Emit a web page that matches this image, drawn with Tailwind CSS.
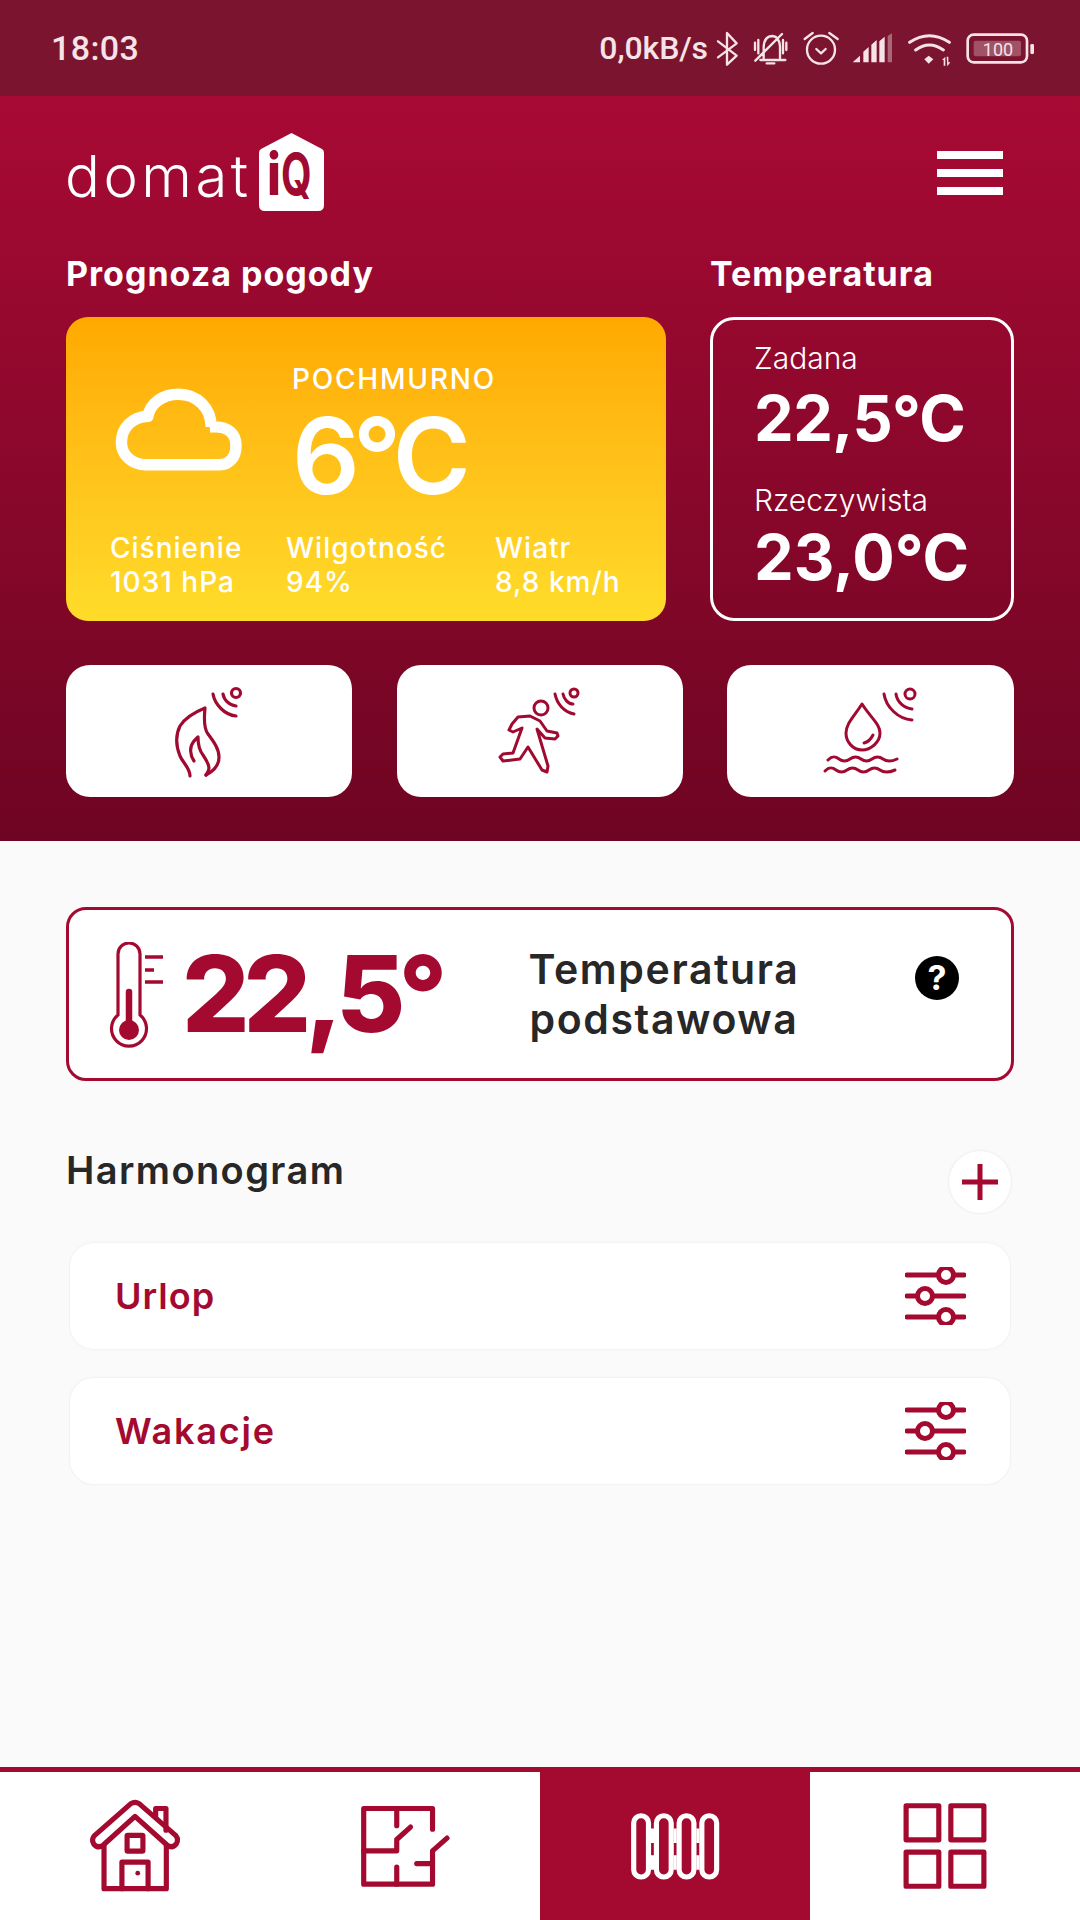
<!DOCTYPE html>
<html lang="pl"><head><meta charset="utf-8"><script src="https://cdn.jsdelivr.net/npm/@tailwindcss/browser@4"></script></head>
<body class="m-0">
<div class="w-[1080px] h-[1920px] flex flex-col bg-[#fafafa] overflow-hidden font-['Inter',sans-serif]">
  <!-- status bar -->
  <div class="h-[96px] shrink-0 bg-[#7b142e] flex items-center justify-between pl-[51px] pr-[44px] text-[#f6e3e8] font-['Roboto',sans-serif]">
    <span class="text-[34px] font-medium leading-none tracking-[0.4px]">18:03</span>
    <div class="flex items-center gap-[8px]">
      <span class="text-[32px] font-medium leading-none tracking-[-0.1px]">0,0kB/s</span>
      <svg class="w-[320px] h-[39px]" viewBox="470 85 960 117" fill="none" stroke="#f6e3e8" stroke-width="7" stroke-linecap="round" stroke-linejoin="round">
        <path d="M476 122 L532 165 L503 192 V97 L532 128 L476 170"/>
        <path d="M613 172 V138 Q615 106 640 106 Q660 108 662 138 V172 M603 178 H678 M622 188 H645 M587 126 V148 M597 118 V158 M671 118 V158 M681 126 V148 M588 180 L668 100"/>
        <circle cx="785" cy="147" r="42"/><path d="M736 115 L760 97 M810 97 L835 115 M771 145 L785 158 L799 145"/>
        <path stroke="none" fill="#f6e3e8" d="M880 185 L902 165 V185 Z M912 153 L928 139 V185 H912 Z M936 132 L952 118 V185 H936 Z M960 122 L976 108 V185 H960 Z"/>
        <path stroke="none" fill="#f6e3e8" fill-opacity=".4" d="M985 106 L998 98 V185 H985 Z"/>
        <path d="M1051 125 Q1110 85 1170 125 M1069 148 Q1110 118 1152 148" stroke-width="9"/>
        <path stroke="none" fill="#f6e3e8" d="M1095 176 L1108 165 L1122 176 L1108 189 Z M1148 178 L1158 168 V195 H1153 V178 Z M1162 168 H1167 V185 H1173 L1164 197 Z"/>
        <rect x="1225" y="102" width="178" height="83" rx="18" stroke-width="8"/>
        <rect x="1243" y="120" width="142" height="47" rx="6" fill="#f6e3e8" fill-opacity=".3" stroke="none"/>
        <text x="1316" y="166" text-anchor="middle" font-family="Roboto" font-size="54" font-weight="400" fill="#f6e3e8" stroke="none">100</text>
        <rect x="1413" y="130" width="11" height="30" rx="4" fill="#f6e3e8" stroke="none"/>
      </svg>
    </div>
  </div>
  <!-- header -->
  <div class="h-[745px] shrink-0 bg-gradient-to-b from-[#a80a34] to-[#6e0522] px-[66px] pt-[37px] text-white">
    <div class="flex items-start justify-between h-[78px]">
      <div class="flex items-end gap-[7px] -ml-[1px]">
        <span class="text-[58px] font-light leading-[58px] tracking-[3.5px] mb-[6px]">domat</span>
        <svg class="w-[65px] h-[78px]" viewBox="0 0 65 78">
          <path fill="#fff" d="M32.5 0 L63 16 Q65 17 65 20 V72 Q65 78 59 78 H6 Q0 78 0 72 V20 Q0 17 2 16 Z"/>
          <text transform="translate(8 62) scale(.85 1)" font-family="Inter" font-size="58" font-weight="800" fill="#a00a30">i</text>
          <text transform="translate(22 62) scale(.68 1)" font-family="Inter" font-size="58" font-weight="700" fill="#a00a30">Q</text>
        </svg>
      </div>
      <div class="flex flex-col gap-[10px] mt-[18px] mr-[11px]">
        <div class="w-[66px] h-[8px] bg-white"></div>
        <div class="w-[66px] h-[8px] bg-white"></div>
        <div class="w-[66px] h-[8px] bg-white"></div>
      </div>
    </div>
    <div class="flex justify-between mt-[43px] h-[40px] items-center text-[34px] font-bold leading-none">
      <span class="tracking-[1px]">Prognoza pogody</span>
      <span class="w-[304px] tracking-[1px]">Temperatura</span>
    </div>
    <div class="flex justify-between mt-[23px]">
      <div class="w-[600px] h-[304px] rounded-[22px] bg-gradient-to-b from-[#ffa900] to-[#ffdc2a] flex flex-col pl-[44px]">
        <div class="flex h-[190px]">
          <svg class="w-[143px] h-[106px] mt-[52px] -ml-[3px] shrink-0" viewBox="140 260 350 260" fill="none" stroke="#fff" stroke-width="28" stroke-linejoin="round"><path d="M392 402 H405 C435 402 456 418 456 448 C456 476 440 495 415 495 H235 C200 495 175 470 175 440 C175 405 200 378 240 376 C245 345 275 322 315 322 C360 322 395 355 395 402"/></svg>
          <div class="ml-[42px] pt-[42px]">
            <div class="text-[28px] font-medium leading-[40px] h-[47px] tracking-[1.8px]">POCHMURNO</div>
            <div class="text-[106px] font-semibold leading-[100px] tracking-[-7px]">6°C</div>
          </div>
        </div>
        <div class="flex text-[28px] font-medium leading-[34px] mt-[24px] tracking-[1px]">
          <div class="w-[176px]">Ciśnienie<br>1031 hPa</div>
          <div class="w-[209px]">Wilgotność<br>94%</div>
          <div>Wiatr<br>8,8 km/h</div>
        </div>
      </div>
      <div class="w-[304px] h-[304px] rounded-[24px] border-[3px] border-white pl-[41px] pt-[21px]">
        <div class="text-[30px] font-light leading-[34px]">Zadana</div>
        <div class="text-[63px] font-bold leading-[70px] tracking-[-0.5px] mt-[8px]">22,5°C</div>
        <div class="text-[30px] font-light leading-[34px] mt-[30px]">Rzeczywista</div>
        <div class="text-[63px] font-bold leading-[70px] tracking-[0px] mt-[5px]">23,0°C</div>
      </div>
    </div>
    <div class="flex justify-between mt-[44px]">
      <div class="w-[286px] h-[132px] rounded-[24px] bg-white flex items-center justify-center">
        <svg class="w-[120px] h-[120px]" viewBox="0 0 120 120" fill="none" stroke="#a00a30" stroke-width="3.2" stroke-linecap="round" stroke-linejoin="round">
          <path d="M41 105 C41 97 34 92 31 85 C27 75 26 65 31 55 C36 47 46 41 56 37 C55 47 55 58 59 63 C65 71 70 78 70 86 C70 94 65 100 57 104"/>
          <path d="M45 90 C41 84 40 76 45 70 L49 66 C49 74 50 79 54 84 C58 90 60 93 60 97 C60 100 58 102 57 104"/>
          <circle cx="87" cy="22" r="4.5"/><path d="M74 23 C75 29 80 34 87 35 M64 23 C66 34 76 44 87 45"/>
        </svg>
      </div>
      <div class="w-[286px] h-[132px] rounded-[24px] bg-white flex items-center justify-center">
        <svg class="w-[120px] h-[120px]" viewBox="0 0 120 120" fill="none" stroke="#a00a30" stroke-width="3" stroke-linecap="round" stroke-linejoin="round">
          <circle cx="61" cy="37" r="7"/>
          <path d="M38 46 L50 45 L60 50 L67 60 L77 62 L78 65 L75 68 L65 67 L57 58 L68 95 L67 101 L62 99 L48 76 L40 88 L23 90 L20 86 L23 83 L33 82 L42 57 L33 61 L29 59 L32 53 Z"/>
          <circle cx="94" cy="22" r="4"/><path d="M83 23 C84 28 88 33 93 33 M75 23 C77 33 84 41 94 43"/>
        </svg>
      </div>
      <div class="w-[287px] h-[132px] rounded-[24px] bg-white flex items-center justify-center">
        <svg class="w-[120px] h-[120px]" viewBox="10 0 120 120" fill="none" stroke="#a00a30" stroke-width="3" stroke-linecap="round" stroke-linejoin="round">
          <path d="M61 33 C52 47 45 53 45 62 C45 71 52 79 61 79 C70 79 79 71 79 62 C79 53 70 47 61 33 Z"/>
          <path d="M63 72 C67 71 70 68 72 64"/>
          <path d="M27 89 C31 85 34 85 38 88 C42 91 45 91 49 88 C53 85 56 85 60 88 C64 91 67 91 71 88 C75 85 78 85 82 88 C86 91 90 91 96 88"/>
          <path d="M24 100 C28 96 31 96 35 99 C39 102 42 102 46 99 C50 96 53 96 57 99 C61 102 64 102 68 99 C72 96 75 96 79 99 C83 102 87 102 94 99"/>
          <circle cx="109" cy="23" r="5"/><path d="M95 23 C96 31 103 37 111 38 M83 23 C85 36 97 48 111 49"/>
        </svg>
      </div>
    </div>
  </div>
  <!-- main -->
  <div class="flex-1 px-[66px] pt-[66px]">
    <div class="h-[174px] rounded-[20px] border-[3px] border-[#a40a30] bg-white flex items-center">
      <svg class="w-[70px] h-[110px] ml-[34px] mt-[5px] shrink-0" viewBox="0 0 70 110" fill="none" stroke="#a40a30" stroke-width="3.2">
        <path d="M15 73 V12 A11 11 0 0 1 37 12 V73 A17.5 17.5 0 1 1 15 73 Z" />
        <circle cx="26" cy="88" r="10" fill="#a40a30" stroke="none"/>
        <path d="M26 88 V50" stroke-width="6.5" stroke-linecap="round"/>
        <path d="M42 15 H60 M42 28 H51 M42 40 H60" stroke-width="3.5"/>
      </svg>
      <span class="text-[106px] font-extrabold text-[#a40a30] leading-none ml-[9px] tracking-[-6px] w-[282px] shrink-0">22,5°</span>
      <div class="w-[400px] text-center text-[41px] font-semibold leading-[50px] tracking-[1.6px] text-[#272727] shrink-0">Temperatura<br>podstawowa</div>
      <div class="ml-[51px] w-[44px] h-[44px] rounded-full bg-black text-white flex items-center justify-center text-[34px] font-bold leading-none -mt-[32px] shrink-0">?</div>
    </div>
    <div class="flex justify-between items-start mt-[64px] pr-[3px]">
      <span class="text-[38px] font-semibold leading-[50px] text-[#272727] tracking-[1.4px]">Harmonogram</span>
      <div class="w-[62px] h-[62px] rounded-full bg-white shadow-[0_0_3px_rgba(0,0,0,0.1)] flex items-center justify-center mt-[6px]">
        <svg class="w-[40px] h-[40px]" viewBox="0 0 40 40" stroke="#a40a30" stroke-width="5"><path d="M20 2 V38 M2 20 H38"/></svg>
      </div>
    </div>
    <div class="flex flex-col gap-[29px] mt-[30px] mx-[4px]">
      <div class="h-[106px] rounded-[24px] bg-white shadow-[0_0_3px_rgba(0,0,0,0.08)] flex items-center justify-between pl-[45px] pr-[44px]">
        <span class="text-[36px] font-semibold text-[#a40a30] leading-none tracking-[1px]">Urlop</span>
        <svg class="w-[61px] h-[58px]" viewBox="0 0 61 58" fill="#fff" stroke="#a40a30" stroke-width="5" stroke-linecap="round"><path d="M2 8 H59 M2 29 H59 M2 50 H59"/><circle cx="41" cy="8" r="7.5"/><circle cx="20" cy="29" r="7.5"/><circle cx="41" cy="50" r="7.5"/></svg>
      </div>
      <div class="h-[106px] rounded-[24px] bg-white shadow-[0_0_3px_rgba(0,0,0,0.08)] flex items-center justify-between pl-[45px] pr-[44px]">
        <span class="text-[36px] font-semibold text-[#a40a30] leading-none tracking-[1.8px]">Wakacje</span>
        <svg class="w-[61px] h-[58px]" viewBox="0 0 61 58" fill="#fff" stroke="#a40a30" stroke-width="5" stroke-linecap="round"><path d="M2 8 H59 M2 29 H59 M2 50 H59"/><circle cx="41" cy="8" r="7.5"/><circle cx="20" cy="29" r="7.5"/><circle cx="41" cy="50" r="7.5"/></svg>
      </div>
    </div>
  </div>
  <!-- nav -->
  <div class="h-[153px] shrink-0 grid grid-cols-4 bg-white border-t-[5px] border-[#a40a30]">
    <div>
      <svg class="w-[270px] h-[148px]" viewBox="0 66 784 430" fill="none" stroke="#a40a30" stroke-width="15" stroke-linecap="round" stroke-linejoin="round">
        <path d="M380 158 Q392 150 404 158 L510 250 Q520 262 512 275 Q500 290 485 278 L392 195 L300 278 Q285 290 272 275 Q264 262 275 250 Z"/>
        <path d="M302 280 V405 H483 V280"/>
        <rect x="369" y="250" width="46" height="46" rx="2"/>
        <path d="M354 405 V328 H430 V405"/>
        <circle cx="400" cy="360" r="7" fill="#a40a30" stroke="none"/>
        <path d="M452 195 V172 H482 V235"/>
      </svg>
    </div>
    <div>
      <svg class="w-[270px] h-[148px]" viewBox="784 66 784 430" fill="none" stroke="#a40a30" stroke-width="15" stroke-linecap="round" stroke-linejoin="round">
        <path d="M1152 172 H1056 V392 H1256 V295 L1298 258"/>
        <path d="M1152 172 H1256 V232 M1152 172 V222 M1192 226 L1152 262 V295 H1056 M1152 342 V392 M1210 332 H1256"/>
      </svg>
    </div>
    <div class="bg-[#a40a30] -mt-[5px] pt-[5px]">
      <svg class="w-[270px] h-[148px]" viewBox="0 66 784 430" fill="none" stroke="#fff" stroke-width="15">
        <rect x="272" y="193" width="43" height="178" rx="21"/><rect x="338" y="193" width="43" height="178" rx="21"/><rect x="404" y="193" width="43" height="178" rx="21"/><rect x="470" y="193" width="43" height="178" rx="21"/>
        <path stroke-width="9" d="M326.500 230 V272 M326.500 308 V350 M392.500 230 V272 M392.500 308 V350 M458.500 230 V272 M458.500 308 V350"/>
      </svg>
    </div>
    <div>
      <svg class="w-[270px] h-[148px]" viewBox="784 66 784 430" fill="none" stroke="#a40a30" stroke-width="15" stroke-linejoin="round">
        <rect x="1063" y="164" width="95" height="99"/><rect x="1193" y="164" width="96" height="99"/><rect x="1063" y="299" width="95" height="99"/><rect x="1193" y="299" width="96" height="99"/>
      </svg>
    </div>
  </div>
</div>
</body></html>
